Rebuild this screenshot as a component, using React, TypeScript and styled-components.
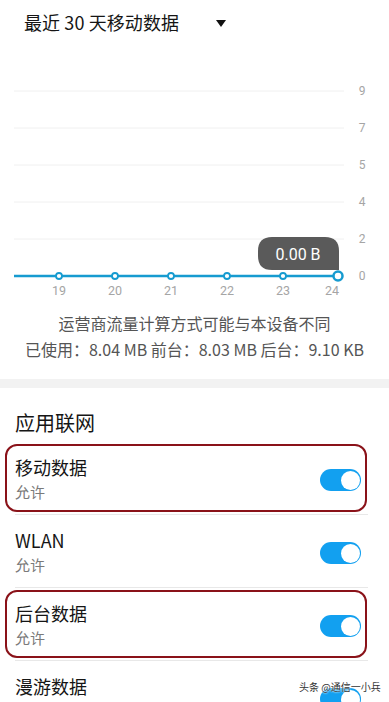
import React from "react";
import styled, { createGlobalStyle } from "styled-components";

const GlobalStyle = createGlobalStyle`
  html, body {
    margin: 0;
    padding: 0;
    background: #ffffff;
    font-family: "Noto Sans CJK SC", "Noto Sans", Roboto, sans-serif;
    color: #1a1a1a;
  }
`;

const yTicks = [
  { label: "9", y: 47 },
  { label: "7", y: 84 },
  { label: "5", y: 121 },
  { label: "4", y: 158 },
  { label: "2", y: 195 },
  { label: "0", y: 232 },
];

const days = [
  { label: "19", x: 59 },
  { label: "20", x: 115 },
  { label: "21", x: 171 },
  { label: "22", x: 227 },
  { label: "23", x: 283 },
];

// the last row's subtitle sits below the fold in the screenshot
const rows = [
  { title: "移动数据", sub: "允许", highlight: true },
  { title: "WLAN", sub: "允许", highlight: false },
  { title: "后台数据", sub: "允许", highlight: true },
  { title: "漫游数据", sub: "", highlight: false },
];

const App: React.FC = () => {
  return (
    <Page>
      <GlobalStyle />
      <Header>
        <Title>最近 30 天移动数据</Title>
        <Caret />
      </Header>

      <Chart viewBox="0 0 389 260" width={389} height={260}>
        {yTicks.map((t) => (
          <g key={t.label}>
            {t.label !== "0" && <line x1={14} x2={344} y1={t.y} y2={t.y} stroke="#f0f0f0" strokeWidth={1} />}
            <text x={362} y={t.y + 4} fontSize={12} fill="#a5a5a5" textAnchor="middle" fontFamily="Roboto, sans-serif">
              {t.label}
            </text>
          </g>
        ))}
        <line x1={14} x2={338} y1={232} y2={232} stroke="#169bd0" strokeWidth={2.5} />
        {days.map((d) => (
          <g key={d.label}>
            <circle cx={d.x} cy={232} r={3} fill="#fff" stroke="#169bd0" strokeWidth={1.8} />
            <text x={d.x} y={251} fontSize={12.5} fill="#a5a5a5" textAnchor="middle" fontFamily="Roboto, sans-serif">
              {d.label}
            </text>
          </g>
        ))}
        <circle cx={338} cy={232} r={4.5} fill="#fff" stroke="#169bd0" strokeWidth={2.5} />
        <text x={332} y={251} fontSize={12.5} fill="#a5a5a5" textAnchor="middle" fontFamily="Roboto, sans-serif">
          24
        </text>
        <path d="M272 193 H325 Q339 193 339 207 V226 H272 Q258 226 258 212 V207 Q258 193 272 193 Z" fill="#5a5a5a" />
        <text x={298} y={215.5} fontSize={16} fill="#ffffff" textAnchor="middle" fontFamily="Roboto, sans-serif">
          0.00 B
        </text>
      </Chart>

      <Summary>
        <SummaryLine>运营商流量计算方式可能与本设备不同</SummaryLine>
        <SummaryLine>已使用：8.04 MB 前台：8.03 MB 后台：9.10 KB</SummaryLine>
      </Summary>

      <Band />

      <SectionTitle>应用联网</SectionTitle>
      <List>
        {rows.map((r) => (
          <Row key={r.title} $highlight={r.highlight}>
            <RowText>
              <RowTitle>{r.title}</RowTitle>
              {r.sub && <RowSub>{r.sub}</RowSub>}
            </RowText>
            <Toggle>
              <Knob />
            </Toggle>
          </Row>
        ))}
      </List>
      <Watermark>头条 @通信一小兵</Watermark>
    </Page>
  );
};

const Page = styled.div`
  position: relative;
  width: 389px;
  height: 702px;
  overflow: hidden;
  background: #fff;
`;

const Header = styled.div`
  display: flex;
  align-items: center;
  height: 44px;
  padding-left: 24px;
`;

const Title = styled.div`
  font-size: 18px;
  color: #151515;
  letter-spacing: 0.1px;
`;

const Caret = styled.div`
  margin-left: 37px;
  width: 0;
  height: 0;
  border-left: 5px solid transparent;
  border-right: 5px solid transparent;
  border-top: 7px solid #111;
  margin-top: 2px;
`;

const Chart = styled.svg`
  display: block;
`;

const Summary = styled.div`
  display: flex;
  flex-direction: column;
  align-items: center;
  padding: 6px 0 17px;
`;

const SummaryLine = styled.div`
  font-size: 16px;
  line-height: 26px;
  color: #555;
  white-space: nowrap;
`;

const Band = styled.div`
  height: 9px;
  background: #f2f2f2;
`;

const SectionTitle = styled.div`
  font-size: 20px;
  line-height: 28px;
  padding: 21px 15px 5px;
  color: #151515;
`;

const List = styled.div`
  padding-left: 15px;
  width: 353px;
`;

const Row = styled.div<{ $highlight: boolean }>`
  position: relative;
  display: flex;
  align-items: center;
  justify-content: space-between;
  height: 72px;
  border-bottom: 1px solid #e8e8e8;

  &::after {
    content: "";
    display: ${(p) => (p.$highlight ? "block" : "none")};
    position: absolute;
    top: 2px;
    bottom: 2px;
    left: -10px;
    right: 1px;
    border: 2.5px solid #8a1219;
    border-radius: 12px;
  }
`;

const RowText = styled.div`
  display: flex;
  flex-direction: column;
  align-self: flex-start;
  padding-top: 13px;
`;

const RowTitle = styled.div`
  font-size: 18px;
  line-height: 24px;
  color: #151515;
`;

const RowSub = styled.div`
  font-size: 15px;
  line-height: 25px;
  color: #7a7a7a;
`;

const Toggle = styled.div`
  display: flex;
  align-items: center;
  justify-content: flex-end;
  width: 41px;
  height: 22px;
  margin-right: 7px;
  margin-top: 4px;
  border-radius: 11px;
  background: #12a0f0;
  box-sizing: border-box;
  padding-right: 1.5px;
`;

const Knob = styled.div`
  width: 19px;
  height: 19px;
  border-radius: 50%;
  background: #fff;
`;

const Watermark = styled.div`
  position: absolute;
  left: 299px;
  top: 680px;
  font-size: 10px;
  line-height: 14px;
  color: #333;
  white-space: nowrap;
  text-shadow: 0 0 2px #fff, 0 0 2px #fff;
`;

export default App;
